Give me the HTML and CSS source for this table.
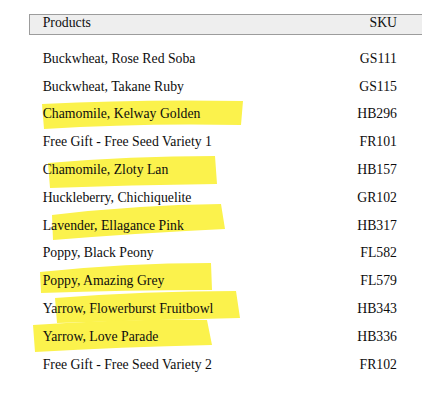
FILE: index.html
```html
<!DOCTYPE html>
<html>
<head>
<meta charset="utf-8">
<link rel="stylesheet" href="styles.css">
</head>
<body>
<svg class="marks" width="422" height="400" viewBox="0 0 422 400" aria-hidden="true">
  <g class="ink">
    <path d="M42,104 Q140,99 243,101 L241,125 Q140,123 44,129 Z"/>
    <path d="M48,163 Q130,156 215,156 L217,184 Q130,185 50,188 Z"/>
    <path d="M52,215 Q135,205 221,204 L225,229 Q140,233 53,240 Z"/>
    <path d="M40,272 Q125,263 211,263 L212,290 Q125,290 41,293 Z"/>
    <path d="M55,298 Q145,291 236,291 L240,318 Q150,320 57,323 Z"/>
    <path d="M33,325 Q120,319 207,320 L212,345 Q120,347 35,352 Z"/>
  </g>
</svg>
<div class="table">
  <div class="head">
    <span>Products</span>
    <span>SKU</span>
  </div>
  <div class="rows">
    <div class="row"><span>Buckwheat, Rose Red Soba</span><span>GS111</span></div>
    <div class="row"><span>Buckwheat, Takane Ruby</span><span>GS115</span></div>
    <div class="row"><span>Chamomile, Kelway Golden</span><span>HB296</span></div>
    <div class="row"><span>Free Gift - Free Seed Variety 1</span><span>FR101</span></div>
    <div class="row"><span>Chamomile, Zloty Lan</span><span>HB157</span></div>
    <div class="row"><span>Huckleberry, Chichiquelite</span><span>GR102</span></div>
    <div class="row"><span>Lavender, Ellagance Pink</span><span>HB317</span></div>
    <div class="row"><span>Poppy, Black Peony</span><span>FL582</span></div>
    <div class="row"><span>Poppy, Amazing Grey</span><span>FL579</span></div>
    <div class="row"><span>Yarrow, Flowerburst Fruitbowl</span><span>HB343</span></div>
    <div class="row"><span>Yarrow, Love Parade</span><span>HB336</span></div>
    <div class="row"><span>Free Gift - Free Seed Variety 2</span><span>FR102</span></div>
  </div>
</div>
</body>
</html>
```
FILE: styles.css
```css
html, body {
  margin: 0;
  padding: 0;
  background: #ffffff;
}
body {
  width: 422px;
  height: 400px;
  overflow: hidden;
  position: relative;
  font-family: "Liberation Serif", "Times New Roman", serif;
  font-size: 13.75px;
  color: #0d0d0d;
}
.marks {
  position: absolute;
  top: 0;
  left: 0;
  z-index: 0;
}
.ink path {
  fill: #fbf24c;
  filter: blur(0.6px);
}
.table {
  position: relative;
  z-index: 1;
  margin: 14px 0 0 28.5px;
  width: 393.5px;
}
.head {
  display: flex;
  justify-content: space-between;
  border: 1px solid #9c9c9c;
  border-right: none;
  background: #eeeeee;
  height: 16px;
  line-height: 16px;
  padding: 0 25px 3px 13.2px;
}
.rows {
  margin-top: 9.75px;
}
.row {
  display: flex;
  justify-content: space-between;
  height: 27.8px;
  line-height: 27.8px;
  padding: 0 25px 0 14.2px;
}
```
